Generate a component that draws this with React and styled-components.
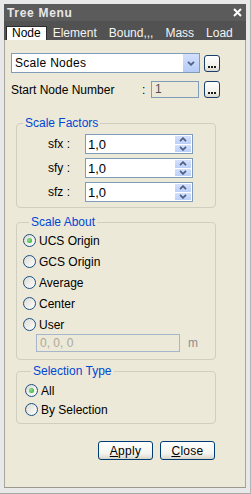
import React from "react";
import styled, { createGlobalStyle, css } from "styled-components";

const GlobalStyle = createGlobalStyle`
  html, body {
    margin: 0;
    padding: 0;
    background: #ffffff;
  }
  body {
    font-family: "Liberation Sans", Arial, sans-serif;
    font-size: 12px;
    color: #000;
  }
`;

const tabs = ["Node", "Element", "Bound,,,", "Mass", "Load"];
const scaleFactors = ["sfx", "sfy", "sfz"];
const scaleAbout = ["UCS Origin", "GCS Origin", "Average", "Center", "User"];
const selectionTypes = ["All", "By Selection"];

const Chevron = ({ up }) => (
  <svg width="8" height="5" viewBox="0 0 8 5">
    <path
      d={up ? "M1 4.2 L4 1.2 L7 4.2" : "M1 0.8 L4 3.8 L7 0.8"}
      fill="none"
      stroke="#4d6185"
      strokeWidth="1.8"
    />
  </svg>
);

const Dots = () => (
  <DotRow>
    <Dot />
    <Dot />
    <Dot />
  </DotRow>
);

const SpinField = ({ label, value }) => (
  <SpinRow>
    <SpinLabel>{label} :</SpinLabel>
    <SpinBox>
      <SpinValue>{value}</SpinValue>
      <SpinButtons>
        <SpinBtn>
          <Chevron up />
        </SpinBtn>
        <SpinBtn>
          <Chevron />
        </SpinBtn>
      </SpinButtons>
    </SpinBox>
  </SpinRow>
);

const Radio = ({ label, checked, height }) => (
  <RadioRow $h={height}>
    <RadioCircle>{checked && <RadioDot />}</RadioCircle>
    <RadioText>{label}</RadioText>
  </RadioRow>
);

export default function App() {
  return (
    <>
      <GlobalStyle />
      <Window>
        <TitleBar>
          <span>Tree Menu</span>
          <svg width="9" height="9" viewBox="0 0 9 9">
            <path d="M1 1 L8 8 M8 1 L1 8" stroke="#ffffff" strokeWidth="2" />
          </svg>
        </TitleBar>
        <TabBar>
          {tabs.map((t, i) => (
            <Tab key={t} $active={i === 0}>
              {t}
            </Tab>
          ))}
        </TabBar>
        <Body>
          <Row>
            <Select>
              <SelectText>Scale Nodes</SelectText>
              <SelectArrow>
                <Chevron />
              </SelectArrow>
            </Select>
            <DotButton>
              <Dots />
            </DotButton>
          </Row>
          <Row $top={8}>
            <FieldLabel>Start Node Number</FieldLabel>
            <Colon>:</Colon>
            <NodeInput>1</NodeInput>
            <DotButton>
              <Dots />
            </DotButton>
          </Row>

          <Group $top={18} $pt={4} $pb={5}>
            <Legend>Scale Factors</Legend>
            <SpinList>
              {scaleFactors.map((s) => (
                <SpinField key={s} label={s} value="1,0" />
              ))}
            </SpinList>
          </Group>

          <Group $top={7} $pt={1} $pb={7} $pl={6}>
            <Legend>Scale About</Legend>
            {scaleAbout.map((s, i) => (
              <Radio key={s} label={s} checked={i === 0} height={21} />
            ))}
            <UserRow>
              <UserInput>0, 0, 0</UserInput>
              <Unit>m</Unit>
            </UserRow>
          </Group>

          <Group $top={4} $pt={3} $pb={4} $pl={8}>
            <Legend>Selection Type</Legend>
            {selectionTypes.map((s, i) => (
              <Radio key={s} label={s} checked={i === 0} height={19} />
            ))}
          </Group>

          <ButtonRow>
            <PushButton>
              <u>A</u>pply
            </PushButton>
            <PushButton>
              <u>C</u>lose
            </PushButton>
          </ButtonRow>
        </Body>
      </Window>
    </>
  );
}

//================================STYLES===============================
const Window = styled.div`
  width: 251px;
  height: 494px;
  box-sizing: border-box;
  padding: 4px 4px 5px 4px;
  background: #e8e8e8;
  border-right: 1px solid #b4b4b4;
  border-bottom: 1px solid #a8a8a8;
  display: flex;
  flex-direction: column;
`;

const TitleBar = styled.div`
  height: 17px;
  background: #5b5b5b;
  color: #e8e8e8;
  font-weight: bold;
  letter-spacing: 0.7px;
  display: flex;
  align-items: center;
  justify-content: space-between;
  padding: 0 4px 0 3px;
`;

const TabBar = styled.div`
  height: 19px;
  background: #525252;
  display: flex;
  align-items: flex-end;
  padding-left: 2px;
`;

const Tab = styled.div`
  height: 14px;
  line-height: 14px;
  padding: 0 6px;
  color: #f4f4f4;
  ${(p) =>
    p.$active &&
    css`
      color: #000;
      background: #ffffff;
      box-shadow: inset 1px 1px 0 #2a2a2a, inset -1px 0 0 #2a2a2a;
    `}
`;

const Body = styled.div`
  flex: 1;
  background: #ece9d8;
  border-left: 1px solid #a6a59e;
  border-right: 1px solid #a6a59e;
  border-bottom: 1px solid #9a9990;
  padding: 13px 0 0 6px;
  display: flex;
  flex-direction: column;
  align-items: flex-start;
`;

const Row = styled.div`
  display: flex;
  align-items: center;
  margin-top: ${(p) => p.$top || 0}px;
`;

const Select = styled.div`
  width: 189px;
  height: 20px;
  box-sizing: border-box;
  border: 1px solid #7f9db9;
  background: #fff;
  display: flex;
  align-items: center;
  margin-right: 4px;
`;

const SelectText = styled.span`
  padding-left: 3px;
  letter-spacing: 0.3px;
`;

const SelectArrow = styled.div`
  margin-left: auto;
  width: 16px;
  height: 18px;
  background: linear-gradient(#d3e0fd, #b6cbf6);
  display: flex;
  align-items: center;
  justify-content: center;
`;

const DotButton = styled.div`
  width: 16px;
  height: 17px;
  box-sizing: border-box;
  border: 1px solid #1b3f6c;
  border-radius: 3px;
  background: linear-gradient(#ffffff, #f1f0ea 70%, #dcd8cc);
  display: flex;
  align-items: flex-end;
  justify-content: center;
  padding-bottom: 3px;
`;

const DotRow = styled.div`
  display: flex;
  gap: 1px;
`;

const Dot = styled.span`
  width: 2px;
  height: 2px;
  background: #1a1a1a;
`;

const FieldLabel = styled.span`
  width: 131px;
`;

const Colon = styled.span`
  width: 9px;
`;

const NodeInput = styled.div`
  width: 48px;
  height: 17px;
  box-sizing: border-box;
  border: 1px solid #7f9db9;
  background: #ece9d8;
  color: #505050;
  padding-left: 3px;
  line-height: 15px;
  margin-right: 5px;
`;

const Group = styled.fieldset`
  margin: ${(p) => p.$top}px 0 0 5px;
  width: 200px;
  box-sizing: border-box;
  border: 1px solid #d0cfbf;
  border-radius: 4px;
  padding: ${(p) => p.$pt}px 0 ${(p) => p.$pb}px ${(p) => p.$pl || 0}px;
  min-width: 0;
`;

const Legend = styled.legend`
  color: #0046d5;
  padding: 0 2px;
  margin-left: 6px;
  line-height: 14px;
`;

const SpinList = styled.div`
  display: flex;
  flex-direction: column;
  gap: 4px;
`;

const SpinRow = styled.div`
  display: flex;
  align-items: center;
  height: 20px;
  padding-left: 31px;
`;

const SpinLabel = styled.span`
  width: 37px;
`;

const SpinBox = styled.div`
  width: 108px;
  height: 20px;
  box-sizing: border-box;
  border: 1px solid #7f9db9;
  background: #fff;
  display: flex;
  align-items: center;
`;

const SpinValue = styled.span`
  padding-left: 2px;
  font-size: 13px;
`;

const SpinButtons = styled.div`
  margin-left: auto;
  width: 16px;
  height: 16px;
  margin-right: 1px;
  display: flex;
  flex-direction: column;
  gap: 1px;
`;

const SpinBtn = styled.div`
  flex: 1;
  background: linear-gradient(#d4e0fd, #bccff8);
  display: flex;
  align-items: center;
  justify-content: center;
`;

const RadioRow = styled.div`
  height: ${(p) => p.$h}px;
  display: flex;
  align-items: center;
`;

const RadioCircle = styled.span`
  width: 13px;
  height: 13px;
  box-sizing: border-box;
  border-radius: 50%;
  border: 1px solid #1c5180;
  background: linear-gradient(135deg, #dcdad2, #ffffff);
  display: flex;
  align-items: center;
  justify-content: center;
`;

const RadioDot = styled.span`
  width: 5px;
  height: 5px;
  border-radius: 50%;
  background: radial-gradient(circle at 40% 40%, #8fe38f, #21a121);
`;

const RadioText = styled.span`
  margin-left: 3px;
`;

const UserRow = styled.div`
  display: flex;
  align-items: center;
  margin: -1px 0 0 13px;
  gap: 8px;
`;

const UserInput = styled.div`
  width: 144px;
  height: 18px;
  box-sizing: border-box;
  border: 1px solid #a5b6cb;
  background: #ece9d8;
  color: #aca899;
  padding-left: 3px;
  line-height: 16px;
`;

const Unit = styled.span`
  color: #8d8d8d;
`;

const ButtonRow = styled.div`
  width: 200px;
  margin: 17px 0 0 5px;
  display: flex;
  justify-content: flex-end;
  gap: 7px;
  padding-right: 1px;
  box-sizing: border-box;
`;

const PushButton = styled.div`
  width: 55px;
  height: 19px;
  box-sizing: border-box;
  border: 1px solid #003c74;
  border-radius: 3px;
  background: linear-gradient(#ffffff, #f3f3ee 70%, #d8d4c8);
  display: flex;
  align-items: center;
  justify-content: center;
  letter-spacing: 0.3px;
`;
